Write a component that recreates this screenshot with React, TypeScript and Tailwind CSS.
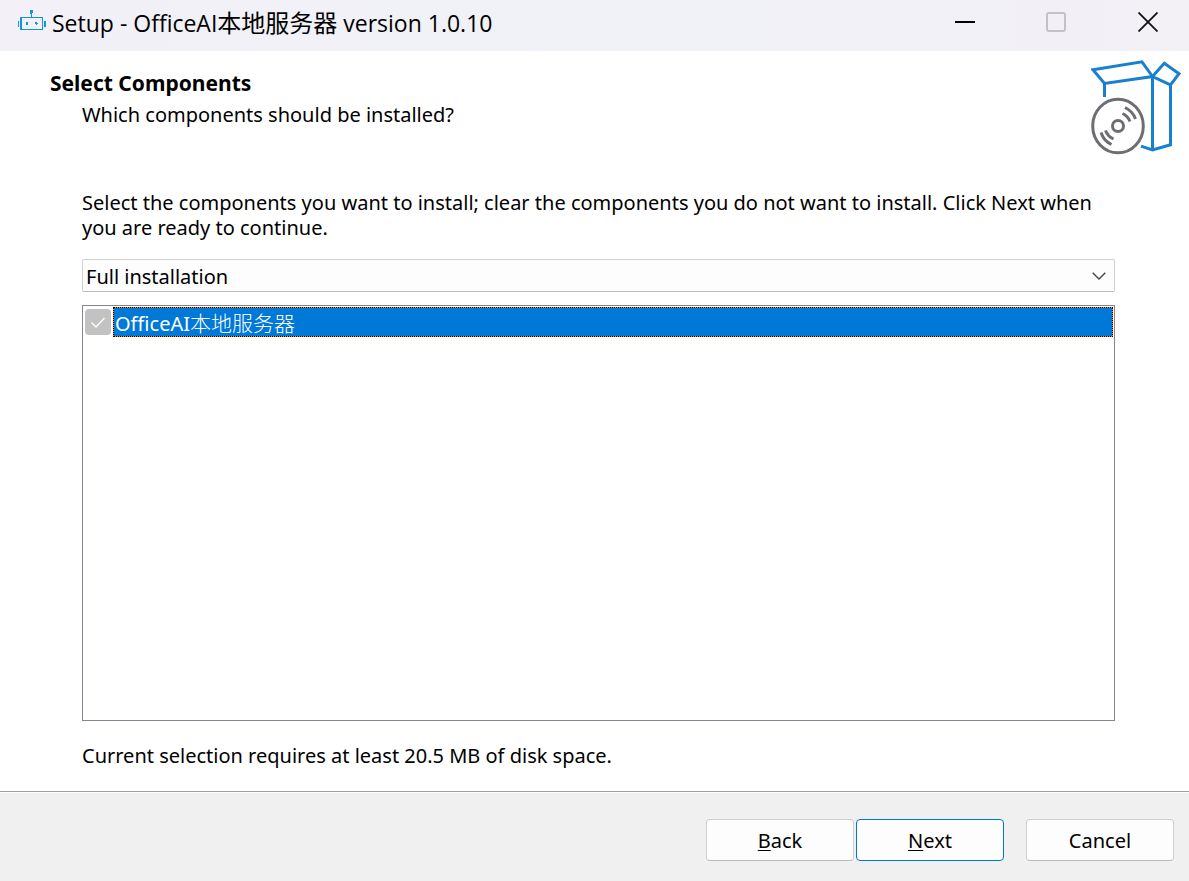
import React from 'react';

function RobotIcon() {
  return (
    <svg className="h-6 w-7 shrink-0" viewBox="0 0 28 24" fill="#1296db" shapeRendering="crispEdges" aria-hidden="true">
      <path fillRule="evenodd" d="M2 9h23v13H2zM3.500 10v11h20.500V10z" />
      <path d="M0 13h1v6H0zM26 13h2v6h-2zM13 6h1v3h-1z" />
      <path d="M12 2h3v3h-1v1h-2zM8 14h2v3H8zM17 14h2v1h1v1h-1v1h-1v-1h-1z" />
    </svg>
  );
}

function SetupIcon() {
  return (
    <svg className="h-24 w-[90px] shrink-0" viewBox="0 0 90 96" fill="none" aria-hidden="true">
      <g stroke="#1980cf" strokeWidth="3">
        <path d="M2 10.700 51 2.800 61.500 17.500 13.500 24.500Z" />
        <path d="M61.500 17.500 73.300 4.200 88 14.700 79.500 25.800Z" />
        <path d="M13.500 23v15M61.500 17.500V91M79.500 25v60.800L61.500 91l-11.500-3.800" />
      </g>
      <g stroke="#6d6e73" strokeWidth="3">
        <ellipse cx="27" cy="67" rx="25.300" ry="26.800" />
        <circle cx="27" cy="67" r="5.500" />
        <path d="M31.500 54.500a15 15 0 0 1 7.500 8M34 48.500a20 20 0 0 1 10.500 11.500M22.500 80a15 15 0 0 1-8-8.500M20.500 85.500a20 20 0 0 1-10.500-12" />
      </g>
    </svg>
  );
}

const button = 'h-[42px] w-[148px] rounded border bg-[#fdfdfd]';
const mnemonic = 'underline decoration-1 underline-offset-2';

export default function App() {
  return (
    <div className="flex min-h-screen flex-col bg-white font-['Noto_Sans','Noto_Sans_CJK_SC',sans-serif] text-[20px] leading-[25px] text-black">
      <header className="flex h-[51px] items-start bg-linear-to-r from-[#f3f0f7] via-[#f0f2f8] to-[#f3f0f6] pl-[18px]">
        <div className="flex flex-1 items-start gap-[6px] pt-[8px]">
          <RobotIcon />
          <h1 className="font-['Open_Sans','Noto_Sans_CJK_SC',sans-serif] text-[23px] leading-[29px]">
            Setup - OfficeAI<span className="text-[24px]">本地服务器</span> version 1.0.10
          </h1>
        </div>
        <div className="flex">
          <button aria-label="Minimize" className="flex h-11 w-[91px] items-center justify-center">
            <svg className="size-5" viewBox="0 0 20 20" aria-hidden="true"><path d="M0 9h20v2H0z" /></svg>
          </button>
          <button aria-label="Maximize" disabled className="flex h-11 w-[91px] items-center justify-center">
            <svg className="size-5" viewBox="0 0 20 20" fill="none" aria-hidden="true"><rect x="1" y="1" width="18" height="18" rx="2" stroke="#c2c1c6" strokeWidth="2" /></svg>
          </button>
          <button aria-label="Close" className="flex h-11 w-[88px] items-center justify-center pl-[6px]">
            <svg className="size-5" viewBox="0 0 20 20" fill="none" aria-hidden="true"><path d="M.5.5l19 19M19.500.5l-19 19" stroke="#111" strokeWidth="1.800" /></svg>
          </button>
        </div>
      </header>

      <main className="flex flex-1 flex-col">
        <div className="flex items-start justify-between pt-2 pr-2 pl-[50px]">
          <div className="pt-3">
            <h2 className="text-[21px] font-bold">Select Components</h2>
            <p className="mt-[6px] pl-8">Which components should be installed?</p>
          </div>
          <SetupIcon />
        </div>

        <div className="flex flex-1 flex-col pt-[35px] pr-[74px] pl-[82px]">
          <p id="instructions">Select the components you want to install; clear the components you do not want to install. Click Next when you are ready to continue.</p>
          <div className="relative mt-[19px]">
            <select aria-label="Installation type" className="h-[33px] w-full appearance-none rounded-xs border border-[#d0d0d0] border-b-[#bcbcbc] bg-[#fdfdfd] px-[3px] pt-px">
              <option>Full installation</option>
            </select>
            <svg className="pointer-events-none absolute top-[13px] right-[9px] h-2 w-[14px]" viewBox="0 0 14 8" fill="none" aria-hidden="true"><path d="m.7.8 6.300 6.200L13.300.8" stroke="#444" strokeWidth="1.400" /></svg>
          </div>
          <div role="group" aria-labelledby="instructions" className="mt-[13px] flex-1 border border-[#828790] p-px">
            <label className="flex items-center gap-[2px] pl-px">
              <span className="relative size-[26px] shrink-0">
                <input type="checkbox" checked disabled readOnly className="block size-[26px] appearance-none rounded bg-[#c2c2c2]" />
                <svg className="pointer-events-none absolute inset-0 size-[26px]" viewBox="0 0 26 26" fill="none" aria-hidden="true"><path d="m6.500 13.500 4.500 4.500 8.500-9" stroke="white" strokeWidth="1.300" /></svg>
              </span>
              <span className="flex-1 border border-dotted border-black bg-[#ff8728]">
                <span className="block h-7 bg-[#0078d7] pl-px leading-7 text-white">OfficeAI<span className="font-['Noto_Sans_CJK_SC',sans-serif] text-[21px] font-light">本地服务器</span></span>
              </span>
            </label>
          </div>
          <p className="mt-[22px] mb-[23px]">Current selection requires at least 20.5 MB of disk space.</p>
        </div>
      </main>

      <footer className="border-t border-[#a0a0a0] bg-[#f0f0f0]">
        <div className="flex h-[89px] items-start justify-end border-t border-white pt-[26px] pr-[15px]">
          <button className={`${button} border-[#d0d0d0] border-b-[#bababa]`}><span className={mnemonic}>B</span>ack</button>
          <button className={`${button} ml-[2px] border-[#0078d4]`}><span className={mnemonic}>N</span>ext</button>
          <button className={`${button} ml-[22px] border-[#d0d0d0] border-b-[#bababa]`}>Cancel</button>
        </div>
      </footer>
    </div>
  );
}
